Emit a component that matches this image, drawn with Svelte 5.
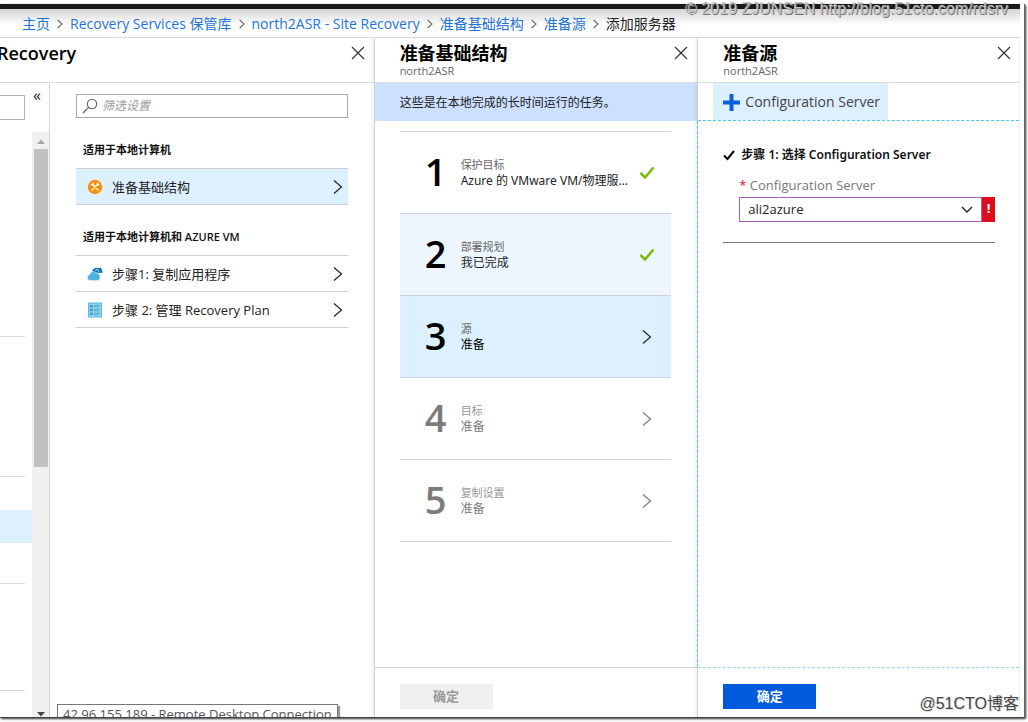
<script>
  const crumbs = ['主页', 'Recovery Services 保管库', 'north2ASR - Site Recovery', '准备基础结构', '准备源'];
  const groups = [
    { title: '适用于本地计算机', items: [{ icon: 'tools', label: '准备基础结构', active: true }] },
    {
      title: '适用于本地计算机和 AZURE VM',
      items: [
        { icon: 'cloud', label: '步骤1: 复制应用程序' },
        { icon: 'plan', label: '步骤 2: 管理 Recovery Plan' }
      ]
    }
  ];
  const steps = [
    { name: '保护目标', value: 'Azure 的 VMware VM/物理服务器', state: 'done' },
    { name: '部署规划', value: '我已完成', state: 'done tinted' },
    { name: '源', value: '准备', state: 'current' },
    { name: '目标', value: '准备', state: 'locked' },
    { name: '复制设置', value: '准备', state: 'locked' }
  ];
  let filter = $state('');
  let server = $state('ali2azure');
</script>

{#snippet close()}
  <button class="close" aria-label="关闭">
    <svg width="14" height="14" viewBox="0 0 14 14"><path d="M1 1l12 12M13 1L1 13" fill="none" stroke="#333" stroke-width="1.2" /></svg>
  </button>
{/snippet}

{#snippet chevron()}
  <svg class="chevron" width="10" height="16" viewBox="0 0 10 16"><path d="M1 1.500l7.500 6.500L1 14.500" fill="none" stroke="currentColor" stroke-width="1.2" /></svg>
{/snippet}

<div class="screen">
  <div class="window">
    <div class="topbar"></div>
    <nav class="crumbs">
      {#each crumbs as crumb}
        <a href="#top">{crumb}</a>
        <svg width="6" height="10" viewBox="0 0 6 10"><path d="M.7 1l4.3 4L.7 9" fill="none" stroke="#666" stroke-width="1.1" /></svg>
      {/each}
      <span>添加服务器</span>
    </nav>

    <main class="blades">
      <section class="blade first">
        <header class="head">
          <h2 class="cut">Recovery</h2>
          {@render close()}
        </header>
        <div class="split">
          <aside class="side">
            <div class="side-top">
              <input class="mini" aria-label="搜索" />
              <button class="collapse" aria-label="折叠">«</button>
            </div>
            <div class="side-body">
              <div class="rail">
                <div class="seg a"></div>
                <div class="seg b"></div>
                <div class="space"></div>
                <div class="picked"></div>
                <div class="seg c"></div>
                <div class="seg d"></div>
              </div>
              <div class="scroll">
                <svg width="8" height="5" viewBox="0 0 8 5"><path d="M0 5l4-4.500L8 5z" fill="#a3a3a3" /></svg>
                <div class="thumb"></div>
                <svg class="down" width="8" height="5" viewBox="0 0 8 5"><path d="M0 0h8L4 4.500z" fill="#444" /></svg>
              </div>
            </div>
          </aside>
          <div class="settings">
            <label class="search">
              <svg width="16" height="16" viewBox="0 0 16 16"><circle cx="10" cy="6" r="4.7" fill="none" stroke="#666" stroke-width="1.1" /><path d="M6.6 9.4L1 15" stroke="#666" stroke-width="1.3" /></svg>
              <input placeholder="筛选设置" aria-label="筛选设置" bind:value={filter} />
            </label>
            {#each groups as group}
              <h3>{group.title}</h3>
              <ul>
                {#each group.items as item}
                  <li>
                    <button class="item" class:active={item.active}>
                      <svg class="icon" width="16" height="16" viewBox="0 0 16 16">
                        {#if item.icon === 'tools'}
                          <circle cx="8" cy="8" r="7.2" fill="#ff8c00" />
                          <path d="M5.500 5.500l5.500 5.500M10.500 5.500L5 11" stroke="#fff" stroke-width="1.4" stroke-linecap="round" />
                          <path d="M3.600 5.200A2.200 2.200 0 0 0 7 6.600 2.200 2.200 0 0 0 5.200 3.500L5.800 5.300z" fill="#fff" />
                          <path d="M9.200 4.600l1.500-1.200 2 2-1.500 1.500z" fill="#fff" />
                        {:else if item.icon === 'cloud'}
                          <path d="M5 5.500C6 2.200 9 .8 11.700 2.300l2.400-.9 1.700 5.400-5 .2z" fill="#0f72c9" />
                          <path d="M8.400 3.900c1.600-.9 3 0 3.300 1.700" fill="none" stroke="#fff" stroke-width="1" />
                          <path d="M2.700 14.500A3 3 0 0 1 2.500 8.700 4.200 4.200 0 0 1 9.600 6.900 3.900 3.900 0 0 1 13 10.900c0 2-1 3.200-2.200 3.600z" fill="#4fb2de" stroke="#fff" stroke-width=".4" />
                        {:else}
                          <path d="M1 .5h14v15H1z" fill="#5bbce0" />
                          <path d="M2.200 1.700h11.600v12.600H2.200z" fill="#9ad5ec" />
                          <path d="M3 3h3v2.500H3zM3 6.800h3v2.500H3zM3 10.600h3v2.500H3z" fill="#3d9fcb" />
                          <path d="M7 3.500h6M7 5h5M7 7.300h6M7 8.800h5M7 11.100h6M7 12.600h5" stroke="#3d9fcb" stroke-width=".8" />
                        {/if}
                      </svg>
                      <span>{item.label}</span>
                      {@render chevron()}
                    </button>
                  </li>
                {/each}
              </ul>
            {/each}
          </div>
        </div>
      </section>

      <section class="blade second">
        <header class="head">
          <div><h2>准备基础结构</h2><p>north2ASR</p></div>
          {@render close()}
        </header>
        <p class="banner">这些是在本地完成的长时间运行的任务。</p>
        <ol class="steps">
          {#each steps as step, i}
            <li>
              <button class="step {step.state}">
                <b>{i + 1}</b>
                <span class="txt"><small>{step.name}</small><span>{step.value}</span></span>
                {#if step.state.startsWith('done')}
                  <svg class="tick" width="16" height="14" viewBox="0 0 16 14"><path d="M1.500 7l4.500 4.500L14.500 1.500" fill="none" stroke="#7aba00" stroke-width="2.500" /></svg>
                {:else}
                  {@render chevron()}
                {/if}
              </button>
            </li>
          {/each}
        </ol>
        <footer><button class="ok" disabled>确定</button></footer>
      </section>

      <section class="blade third">
        <header class="head">
          <div><h2>准备源</h2><p>north2ASR</p></div>
          {@render close()}
        </header>
        <div class="tools">
          <button class="add">
            <svg width="17" height="17" viewBox="0 0 17 17"><path d="M8.500 0v17M0 8.500h17" stroke="#0a5fdc" stroke-width="4" /></svg>
            Configuration Server
          </button>
        </div>
        <div class="form">
          <h4>
            <svg width="12" height="12" viewBox="0 0 12 12"><path d="M1 6.500l3.500 3.500L11 2" fill="none" stroke="#000" stroke-width="2" /></svg>
            步骤 1: 选择 Configuration Server
          </h4>
          <label class="field" for="server"><i>*</i> Configuration Server</label>
          <div class="pick">
            <select id="server" class="server" bind:value={server}><option>ali2azure</option></select>
            <svg class="arrow" width="12" height="8" viewBox="0 0 12 8"><path d="M1 1l5 5 5-5" fill="none" stroke="#222" stroke-width="1.4" /></svg>
            <span class="alert">!</span>
          </div>
        </div>
        <footer><button class="ok primary">确定</button></footer>
      </section>
    </main>
    <div class="tip">42.96.155.189 - Remote Desktop Connection</div>
  </div>
  <div class="mark top">© 2019 ZJUNSEN http://blog.51cto.com/rdsrv</div>
  <div class="mark bottom">@51CTO博客</div>
</div>

<style>
  :global(body) { margin: 0; background: #fff; }
  .screen, .screen * { box-sizing: border-box; }
  .screen {
    position: relative;
    display: flex;
    min-height: 100vh;
    padding: 4px 3px 4px 0;
    overflow: hidden;
    font: 13px/16px "Open Sans", "Noto Sans CJK SC", sans-serif;
    color: #222;
  }
  h2, h3, h4, p, ul, ol { margin: 0; padding: 0; font-size: inherit; }
  ul, ol { list-style: none; }
  button, input, select { font: inherit; color: inherit; margin: 0; padding: 0; border: 0; border-radius: 0; background: none; }
  svg { flex: none; display: block; }
  .window {
    position: relative;
    flex: 1;
    display: flex;
    flex-direction: column;
    min-width: 0;
    padding-right: 4px;
    border-right: 1px solid #666;
    border-bottom: 1px solid #444;
    box-shadow: 1px 1px 2px #333;
    overflow: hidden;
  }
  .topbar { height: 5px; background: #1a1a1a; }
  .crumbs {
    display: flex;
    align-items: center;
    gap: 7px;
    height: 29px;
    padding: 1px 0 0 22px;
    border-bottom: 1px solid #dcdcdc;
    background: linear-gradient(#d4d4d4, #fff 16px);
    font-size: 14px;
    white-space: nowrap;
  }
  .crumbs a { color: #1f74d8; text-decoration: none; }
  .blades { flex: 1; display: grid; grid-template-columns: 374fr 324fr 322fr; min-height: 0; border-right: 1px solid #eee; }
  .blade { display: flex; flex-direction: column; min-width: 0; }
  .second, .third { border-left: 1px solid #d2d2d2; box-shadow: -2px 0 3px #0000000f; }
  .head {
    display: flex;
    justify-content: space-between;
    height: 45px;
    padding: 4px 8px 0 25px;
    border-bottom: 1px solid #dcdcdc;
    overflow: hidden;
  }
  .first .head { padding-left: 0; }
  .third .head { padding-right: 7px; }
  h2 { font-size: 18px; line-height: 22px; font-weight: 600; color: #000; white-space: nowrap; }
  .cut { margin-left: -3px; }
  .head p { padding-top: 1px; font-size: 11px; line-height: 12px; color: #666; }
  .close { display: grid; place-items: center; width: 16px; height: 22px; }

  .split { flex: 1; display: flex; }
  .side { display: flex; flex-direction: column; width: 50px; border-right: 1px solid #d6d6d6; }
  .side-top { display: flex; justify-content: space-between; height: 49px; padding: 4px 8px 0 0; }
  .mini { width: 25px; height: 25px; margin-top: 8px; border: 1px solid #b4b4b4; border-left: 0; }
  .collapse { height: 16px; font-size: 16px; line-height: 16px; }
  .side-body { flex: 1; display: flex; }
  .rail { flex: 1; }
  .seg { width: 25px; border-bottom: 1px solid #dcdcdc; }
  .a { height: 205px; }
  .b { height: 140px; }
  .c { height: 41px; }
  .d { height: 107px; }
  .space { height: 33px; }
  .picked { height: 33px; background: #ddf0ff; }
  .scroll { display: flex; flex-direction: column; align-items: center; width: 17px; padding-top: 7px; background: #f0f0f0; }
  .thumb { width: 14px; height: 318px; margin-top: 5px; background: #c1c1c1; }
  .down { margin-top: auto; }

  .settings { flex: 1; min-width: 0; padding: 11px 26px 0 26px; }
  .search { display: flex; align-items: center; gap: 4px; height: 24px; padding-left: 5px; border: 1px solid #aaa; }
  .search input { flex: 1; min-width: 0; height: 20px; padding-bottom: 2px; font-size: 12px; outline: 0; }
  .search input::placeholder { color: #999; font-style: italic; opacity: 1; }
  h3 { padding: 24px 0 10px 7px; font-size: 11px; line-height: 16px; font-weight: 600; color: #111; }
  li { border-bottom: 1px solid #d0d0d0; }
  ul { border-top: 1px solid #d0d0d0; }
  .item { display: flex; align-items: center; gap: 9px; width: 100%; height: 35px; padding: 0 5px 0 11px; font-size: 13px; text-align: left; }
  .item span { flex: 1; white-space: nowrap; }
  .active { background: #ddf0ff; }

  .banner { height: 38px; padding: 12px 25px 10px; background: #cce0ff; font-size: 12px; line-height: 16px; white-space: nowrap; }
  .steps { margin: 10px 26px 0 25px; border-top: 1px solid #d0d0d0; }
  .step { display: flex; align-items: center; width: 100%; height: 81px; padding: 0 16px 0 22px; text-align: left; }
  .step b { width: 28px; padding-bottom: 4px; margin-right: 11px; text-align: center; font-size: 38px; line-height: 48px; font-weight: 600; color: #000; }
  .txt { flex: 1; min-width: 0; display: flex; flex-direction: column; font-family: "Noto Sans", "Noto Sans CJK SC", sans-serif; }
  .txt small { font-size: 11px; line-height: 16px; color: #666; }
  .txt span { overflow: hidden; text-overflow: ellipsis; white-space: nowrap; font-size: 12px; line-height: 16px; }
  .step .chevron { margin-right: 3px; }
  .tinted { background: #edf6ff; }
  .current { background: #ddf0ff; }
  .current .txt span { color: #000; }
  .locked, .locked b { color: #7c7c7c; }
  .locked small { color: #999; }
  footer { height: 50px; margin-top: auto; padding: 16px 25px 0; border-top: 1px solid #d2d2d2; }
  .ok { width: 93px; height: 25px; padding-bottom: 2px; background: #f0f0f0; color: #999; font-weight: 600; }
  .primary { background: #005bdc; color: #fff; }

  .tools { height: 38px; padding-left: 15px; border-bottom: 1px dashed #4cc4ea; }
  .add { display: flex; align-items: center; gap: 5px; height: 37px; padding: 1px 8px 0 10px; background: #ddf0ff; font-size: 14px; color: #444; white-space: nowrap; }
  .form { flex: 1; margin-left: -1px; padding: 26px 24px 0 25px; border-left: 1px dashed #4cc4ea; }
  .third footer { border-top: 1px dashed #9bd8ec; }
  h4 { display: flex; align-items: center; gap: 6px; font: 600 12px/16px "Noto Sans", "Noto Sans CJK SC", sans-serif; color: #111; white-space: nowrap; }
  .field { display: block; padding: 14px 0 4px 16px; color: #777; }
  .field i { color: #e00b1c; font-style: normal; }
  .pick { position: relative; display: flex; height: 25px; margin-left: 16px; }
  .pick .server { flex: 1; appearance: none; padding: 0 0 2px 8px; border: 1px solid #a55fbd; outline: 0; }
  .arrow { position: absolute; right: 22px; top: 9px; }
  .alert { width: 13px; background: #e00b1c; color: #fff; font-weight: 700; line-height: 22px; text-align: center; }
  .form::after { content: ""; display: block; margin-top: 20px; border-bottom: 1px solid #777; }

  .tip {
    position: absolute;
    left: 57px;
    bottom: -7px;
    height: 20px;
    padding: 1px 5px;
    border: 1px solid #777;
    background: #fff;
    box-shadow: 2px 2px 1px #999;
    color: #555;
    white-space: nowrap;
  }
  .mark { position: absolute; font-family: "Liberation Sans", "Noto Sans CJK SC", sans-serif; font-size: 16px; line-height: 18px; white-space: nowrap; }
  .top { right: 20px; top: 0; color: #c4c4c4; text-shadow: 1px 1px 0 #777; }
  .bottom { right: 9px; bottom: 9px; color: #444; text-shadow: 1px 1px 0 #e0e0e0; }
</style>
